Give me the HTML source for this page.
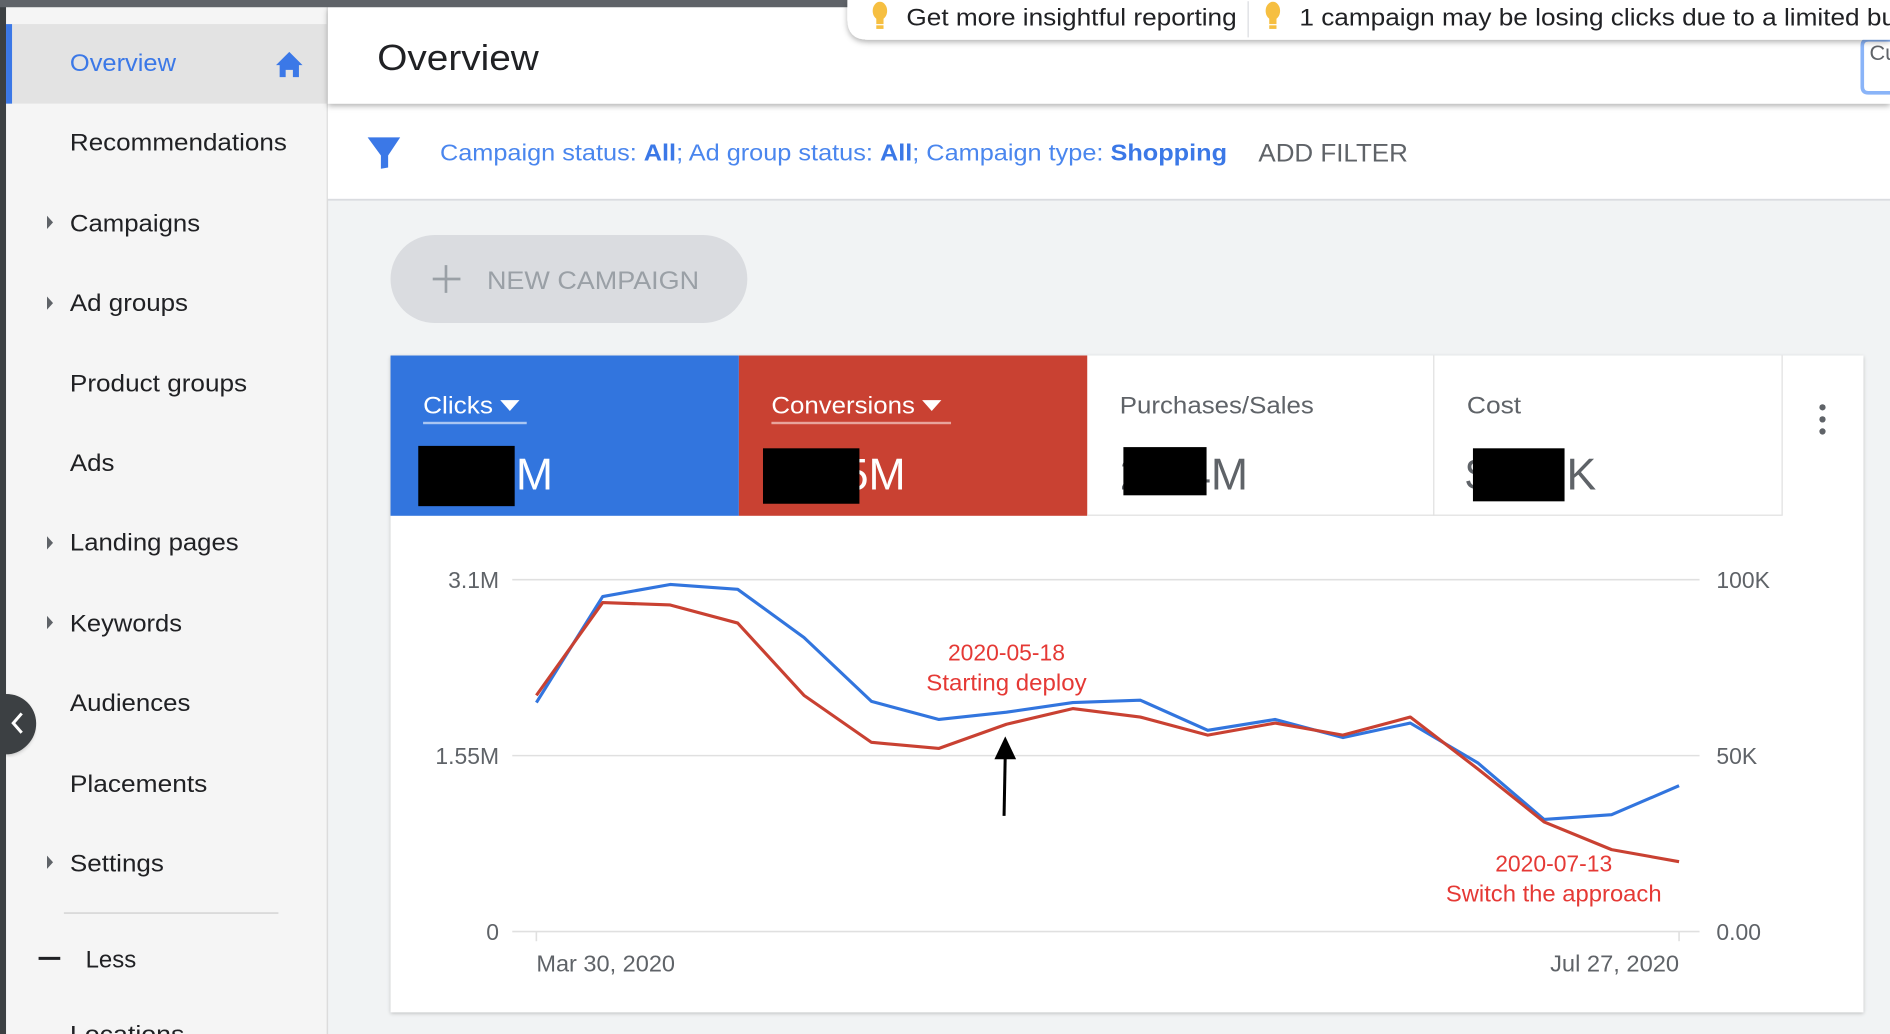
<!DOCTYPE html>
<html><head><meta charset="utf-8"><style>
html,body{margin:0;padding:0;width:1890px;height:1034px;overflow:hidden;background:#f1f3f4}
svg{display:block}
text{font-family:"Liberation Sans",sans-serif}
</style></head><body>
<svg width="1890" height="1034" viewBox="0 0 1568 858" preserveAspectRatio="none" xmlns="http://www.w3.org/2000/svg">
<defs>
<filter id="sh" x="-5%" y="-20%" width="110%" height="160%"><feDropShadow dx="0" dy="2" stdDeviation="2.5" flood-color="#000" flood-opacity="0.3"/></filter>
<filter id="sh2" x="-5%" y="-5%" width="110%" height="110%"><feDropShadow dx="0" dy="1" stdDeviation="1.5" flood-color="#000" flood-opacity="0.22"/></filter>
</defs>
<rect x="0" y="0" width="1568" height="858" fill="#f1f3f4"/>
<!-- sidebar -->
<rect x="5" y="0" width="266" height="858" fill="#f5f5f5"/>
<rect x="271" y="0" width="1.2" height="858" fill="#dcdcdc"/>
<rect x="0" y="0" width="5" height="858" fill="#3c4043"/>
<rect x="5" y="20" width="266" height="66" fill="#e3e3e3"/>
<rect x="5" y="20" width="5" height="66" fill="#3b78e7"/>
<text x="58" y="59" font-size="20" fill="#3b78e7" textLength="88" lengthAdjust="spacingAndGlyphs">Overview</text>
<path d="M240 43 L251 54 L248 54 L248 64 L243 64 L243 58 L237 58 L237 64 L232 64 L232 54 L229 54 Z" fill="#3b78e7"/>
<g font-size="20" fill="#202124">
<text x="58" y="125" textLength="180" lengthAdjust="spacingAndGlyphs">Recommendations</text>
<text x="58" y="192" textLength="108" lengthAdjust="spacingAndGlyphs">Campaigns</text>
<text x="58" y="258" textLength="98" lengthAdjust="spacingAndGlyphs">Ad groups</text>
<text x="58" y="325" textLength="147" lengthAdjust="spacingAndGlyphs">Product groups</text>
<text x="58" y="391" textLength="37" lengthAdjust="spacingAndGlyphs">Ads</text>
<text x="58" y="457" textLength="140" lengthAdjust="spacingAndGlyphs">Landing pages</text>
<text x="58" y="524" textLength="93" lengthAdjust="spacingAndGlyphs">Keywords</text>
<text x="58" y="590" textLength="100" lengthAdjust="spacingAndGlyphs">Audiences</text>
<text x="58" y="657" textLength="114" lengthAdjust="spacingAndGlyphs">Placements</text>
<text x="58" y="723" textLength="78" lengthAdjust="spacingAndGlyphs">Settings</text>
<text x="71" y="803" textLength="42" lengthAdjust="spacingAndGlyphs">Less</text>
<text x="58" y="865" textLength="95" lengthAdjust="spacingAndGlyphs">Locations</text>
</g>
<g fill="#5f6368">
<path d="M39 179 L44 184.5 L39 190 Z"/><path d="M39 246 L44 251.5 L39 257 Z"/>
<path d="M39 445 L44 450.5 L39 456 Z"/><path d="M39 511 L44 516.5 L39 522 Z"/>
<path d="M39 710 L44 715.5 L39 721 Z"/>
</g>
<rect x="53" y="757" width="178" height="1.3" fill="#d6d6d6"/>
<rect x="32" y="794" width="18" height="2.5" fill="#202124"/>
<path d="M5 576 A24 25 0 0 1 5 626 Z" fill="#3c4043" filter="url(#sh2)"/>
<path d="M0 576 L5 576 A24 24.5 0 0 1 30 600 A24 24.5 0 0 1 5 625 L0 625 Z" fill="#3c4043"/>
<path d="M18 592 L11 600 L18 608" stroke="#fff" stroke-width="2.5" fill="none"/>
<!-- filter row -->
<rect x="272" y="86" width="1296" height="79" fill="#fff"/>
<rect x="272" y="165" width="1296" height="1.5" fill="#dadce0"/>
<!-- header -->
<rect x="272" y="6" width="1296" height="80" fill="#fff" filter="url(#sh)"/>
<rect x="0" y="0" width="1568" height="6" fill="#5f6368"/>
<text x="313" y="58" font-size="30" fill="#202124" textLength="134" lengthAdjust="spacingAndGlyphs">Overview</text>
<path d="M1568 33 L1550 33 Q1545 33 1545 38 L1545 72 Q1545 77 1550 77 L1568 77" fill="#fff" stroke="#8ab4f8" stroke-width="3"/>
<text x="1551" y="50" font-size="18" fill="#5f6368">Cu</text>
<!-- notification pill -->
<path d="M703 0 L1568 0 L1568 33 L720 33 Q703 33 703 16 Z" fill="#fff" filter="url(#sh)"/>
<g fill="#f6bf41"><ellipse cx="730" cy="9" rx="6" ry="7.5"/><rect x="727" y="15" width="6" height="5"/><rect x="727" y="21" width="6" height="3"/>
<ellipse cx="1056" cy="9" rx="6" ry="7.5"/><rect x="1053" y="15" width="6" height="5"/><rect x="1053" y="21" width="6" height="3"/></g>
<text x="752" y="21" font-size="20" fill="#202124" textLength="274" lengthAdjust="spacingAndGlyphs">Get more insightful reporting</text>
<rect x="1035" y="1" width="1" height="30" fill="#dadce0"/>
<text x="1078" y="21" font-size="20" fill="#202124" textLength="495" lengthAdjust="spacingAndGlyphs">1 campaign may be losing clicks due to a limited bu</text>
<path d="M305 114 L332 114 L322 129 L322 139 L316 140 L316 129 Z" fill="#3b78e7"/>
<text x="365" y="133" font-size="19.5" fill="#4a86ee" textLength="653" lengthAdjust="spacingAndGlyphs">Campaign status: <tspan font-weight="bold" fill="#3b78e7">All</tspan>; Ad group status: <tspan font-weight="bold" fill="#3b78e7">All</tspan>; Campaign type: <tspan font-weight="bold" fill="#3b78e7">Shopping</tspan></text>
<text x="1044" y="134" font-size="21" fill="#5f6368" textLength="124" lengthAdjust="spacingAndGlyphs">ADD FILTER</text>
<!-- new campaign -->
<rect x="324" y="195" width="296" height="73" rx="36.5" fill="#dadce0"/>
<path d="M370 220 V243 M359 231.5 H382" stroke="#9aa0a6" stroke-width="2.2"/>
<text x="404" y="240" font-size="21" fill="#9aa0a6" textLength="176" lengthAdjust="spacingAndGlyphs">NEW CAMPAIGN</text>
<!-- card -->
<rect x="324" y="295" width="1222" height="545" fill="#fff" filter="url(#sh2)"/>
<rect x="324" y="295" width="289" height="133" fill="#3275de"/>
<rect x="613" y="295" width="289" height="133" fill="#c94132"/>
<rect x="1189" y="295" width="1" height="133" fill="#e0e0e0"/>
<rect x="1478" y="295" width="1" height="133" fill="#e0e0e0"/>
<rect x="902" y="427" width="576" height="1" fill="#e0e0e0"/>
<text x="351" y="343" font-size="20" fill="#fff" textLength="58" lengthAdjust="spacingAndGlyphs">Clicks</text>
<path d="M415 332 L431 332 L423 341 Z" fill="#fff"/>
<rect x="351" y="350" width="86" height="2" fill="#aac6f2"/>
<text x="640" y="343" font-size="20" fill="#fff" textLength="119" lengthAdjust="spacingAndGlyphs">Conversions</text>
<path d="M765 332 L781 332 L773 341 Z" fill="#fff"/>
<rect x="640" y="350" width="149" height="2" fill="#e8a49c"/>
<text x="929" y="343" font-size="20" fill="#5f6368" textLength="161" lengthAdjust="spacingAndGlyphs">Purchases/Sales</text>
<text x="1217" y="343" font-size="20" fill="#5f6368" textLength="45" lengthAdjust="spacingAndGlyphs">Cost</text>
<g font-size="37">
<text x="428" y="406" fill="#fff">M</text>
<text x="700" y="406" fill="#fff">5M</text>
<text x="929" y="406" fill="#5f6368">2</text>
<text x="984" y="406" fill="#5f6368">4M</text>
<text x="1216" y="406" fill="#5f6368">$</text>
<text x="1279" y="406" fill="#5f6368">2K</text>
</g>
<rect x="347" y="370" width="80" height="50" fill="#000"/>
<rect x="633" y="372" width="80" height="46" fill="#000"/>
<rect x="932" y="371" width="69" height="40" fill="#000"/>
<rect x="1222" y="372" width="76" height="44" fill="#000"/>
<g fill="#5f6368"><circle cx="1512" cy="338" r="2.6"/><circle cx="1512" cy="348" r="2.6"/><circle cx="1512" cy="358" r="2.6"/></g>
<!-- chart -->
<g stroke="#e0e0e0" stroke-width="1.3"><line x1="425" y1="481" x2="1410" y2="481"/><line x1="425" y1="627" x2="1410" y2="627"/><line x1="425" y1="773" x2="1410" y2="773"/>
<line x1="445" y1="773" x2="445" y2="781"/><line x1="1393" y1="773" x2="1393" y2="781"/></g>
<g font-size="19" fill="#5f6368">
<text x="414" y="488" text-anchor="end">3.1M</text><text x="414" y="634" text-anchor="end">1.55M</text><text x="414" y="780" text-anchor="end">0</text>
<text x="1424" y="488">100K</text><text x="1424" y="634">50K</text><text x="1424" y="780">0.00</text>
<text x="445" y="806" textLength="115" lengthAdjust="spacingAndGlyphs">Mar 30, 2020</text><text x="1286" y="806" textLength="107" lengthAdjust="spacingAndGlyphs">Jul 27, 2020</text>
</g>
<polyline fill="none" stroke="#3275de" stroke-width="2.6" stroke-linejoin="round" points="445,583 500,495 556,485 612,489 667,529 723,582 779,597 835,591 890,583 946,581 1002,606 1058,597 1114,612 1170,600 1226,633 1281,680 1337,676 1393,652"/>
<polyline fill="none" stroke="#c94132" stroke-width="2.6" stroke-linejoin="round" points="445,577 500,500 556,502 612,517 667,577 723,616 779,621 835,601 890,588 946,595 1002,610 1058,600 1114,610 1170,595 1226,638 1281,682 1337,705 1393,715"/>
<g font-size="19" fill="#e53935" text-anchor="middle">
<text x="835" y="548">2020-05-18</text><text x="835" y="573" textLength="133" lengthAdjust="spacingAndGlyphs">Starting deploy</text>
<text x="1289" y="723">2020-07-13</text><text x="1289" y="748" textLength="179" lengthAdjust="spacingAndGlyphs">Switch the approach</text>
</g>
<line x1="833" y1="677" x2="834" y2="625" stroke="#000" stroke-width="2.5"/>
<path d="M834 611 L843 630 L825 630 Z" fill="#000"/>
</svg>
</body></html>
